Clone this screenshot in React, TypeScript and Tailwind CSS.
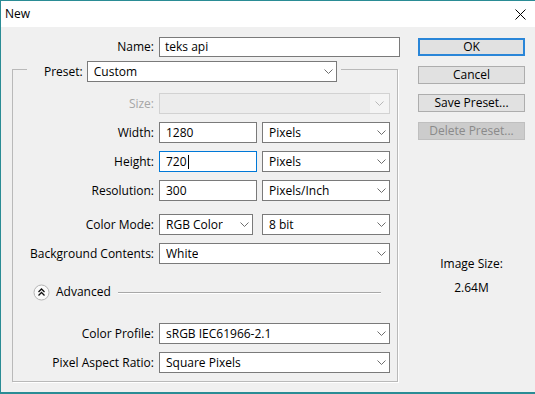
import React from "react";

const Chevron = ({ light = false }: { light?: boolean }) => (
  <svg width="9" height="5" viewBox="0 0 9 5" className="shrink-0">
    <path d="M0.5 0.5 L4.5 4.5 L8.5 0.5" fill="none" stroke={light ? "#b8b8b8" : "#6e6e6e"} strokeWidth="1" />
  </svg>
);

const Select = ({ value, w }: { value: string; w: string }) => (
  <div className={`${w} h-[21px] bg-white border border-[#7a7a7a] flex items-center justify-between pl-[6px] pr-[3px] shrink-0`}>
    <span className="truncate">{value}</span>
    <Chevron />
  </div>
);

const Label = ({ children, dim = false, outer = false }: { children: React.ReactNode; dim?: boolean; outer?: boolean }) => (
  <div className={`${outer ? "w-[147px]" : "w-[146px]"} text-right pr-[5px] shrink-0 ${dim ? "text-[#a6a6a6]" : "text-black"}`}>{children}</div>
);

const Btn = ({ children, primary = false, disabled = false }: { children: React.ReactNode; primary?: boolean; disabled?: boolean }) => (
  <div
    className={`h-[18px] w-[107px] flex items-center justify-center ${
      primary
        ? "border-2 border-[#2a86d8] bg-[#e1e1e1] text-black"
        : disabled
        ? "border border-[#bfbfbf] bg-[#cccccc] text-[#8a8a8a]"
        : "border border-[#adadad] bg-[#e1e1e1] text-black"
    }`}
  >
    {children}
  </div>
);

export default function App() {
  return (
    <div
      className="w-[535px] h-[394px] bg-[#f0f0f0] border-t border-l border-b-2 border-[#2a8c95] flex flex-col text-[12px] leading-[16px] text-black overflow-hidden"
      style={{ fontFamily: '"Open Sans", "Noto Sans", sans-serif' }}
    >
      {/* Title bar */}
      <div className="h-[26px] bg-white flex items-center justify-between shrink-0">
        <span className="pl-[4px] text-[12px]">New</span>
        <svg width="11" height="11" viewBox="0 0 11 11" className="mr-[9px]">
          <path d="M0.5 0.5 L10.5 10.5 M10.5 0.5 L0.5 10.5" stroke="#000" strokeWidth="1" />
        </svg>
      </div>

      {/* Body */}
      <div className="flex pt-[10px] pl-[11px]">
        {/* Left column */}
        <div className="w-[386px] flex flex-col">
          <div className="flex items-center">
            <Label outer>Name:</Label>
            <div className="w-[241px] h-[20px] bg-white border border-[#7a7a7a] flex items-center pl-[5px] shrink-0">teks api</div>
          </div>

          <fieldset className="border border-[#b9b9b9] mt-0 pb-[8px] shadow-[1px_1px_0_#ffffff]">
            <legend className="ml-[14px] pt-[4px] pl-[17px] pr-[4px]">
              <div className="flex items-center gap-[4px]">
                <span>Preset:</span>
                <Select value="Custom" w="w-[250px]" />
              </div>
            </legend>

            <div className="flex flex-col">
              {/* Size */}
              <div className="flex items-center mt-[11px]">
                <Label dim>Size:</Label>
                <div className="w-[231px] h-[21px] bg-[#ececec] border border-[#d2d2d2] flex items-center justify-end">
                  <div className="w-[19px] h-full bg-[#f4f4f4] flex items-center justify-center">
                    <Chevron light />
                  </div>
                </div>
              </div>

              {/* Width */}
              <div className="flex items-center mt-[8px]">
                <Label>Width:</Label>
                <div className="w-[98px] h-[21px] bg-white border border-[#7a7a7a] flex items-center pl-[6px]">1280</div>
                <div className="ml-[5px]">
                  <Select value="Pixels" w="w-[128px]" />
                </div>
              </div>

              {/* Height */}
              <div className="flex items-center mt-[8px]">
                <Label>Height:</Label>
                <div className="w-[98px] h-[21px] bg-white border border-[#0078d7] flex items-center pl-[6px]">
                  720<span className="inline-block w-[1px] h-[14px] bg-black ml-[1px]" />
                </div>
                <div className="ml-[5px]">
                  <Select value="Pixels" w="w-[128px]" />
                </div>
              </div>

              {/* Resolution */}
              <div className="flex items-center mt-[8px]">
                <Label>Resolution:</Label>
                <div className="w-[98px] h-[21px] bg-white border border-[#7a7a7a] flex items-center pl-[6px]">300</div>
                <div className="ml-[5px]">
                  <Select value="Pixels/Inch" w="w-[128px]" />
                </div>
              </div>

              {/* Color Mode */}
              <div className="flex items-center mt-[13px]">
                <Label>Color Mode:</Label>
                <Select value="RGB Color" w="w-[94px]" />
                <div className="ml-[9px]">
                  <Select value="8 bit" w="w-[128px]" />
                </div>
              </div>

              {/* Background */}
              <div className="flex items-center mt-[8px]">
                <Label>Background Contents:</Label>
                <Select value="White" w="w-[231px]" />
              </div>

              {/* Advanced */}
              <div className="flex items-center mt-[20px] pl-[20px] pr-[16px] h-[16px]">
                <svg width="17" height="17" viewBox="0 0 17 17" className="shrink-0">
                  <circle cx="8.5" cy="8.5" r="7.5" fill="#fafafa" stroke="#b4b4b4" />
                  <path d="M5.5 8 L8.5 5 L11.5 8 M5.5 11.5 L8.5 8.5 L11.5 11.5" fill="none" stroke="#111" strokeWidth="1.3" />
                </svg>
                <span className="ml-[6px]">Advanced</span>
                <div className="ml-[7px] flex-1 h-[1px] bg-[#a8a8a8] shadow-[0_1px_0_#ffffff]" />
              </div>

              {/* Color Profile */}
              <div className="flex items-center mt-[23px]">
                <Label>Color Profile:</Label>
                <Select value="sRGB IEC61966-2.1" w="w-[231px]" />
              </div>

              {/* Pixel Aspect Ratio */}
              <div className="flex items-center mt-[8px]">
                <Label>Pixel Aspect Ratio:</Label>
                <Select value="Square Pixels" w="w-[231px]" />
              </div>
            </div>
          </fieldset>
        </div>

        {/* Right column */}
        <div className="ml-[20px] w-[107px] flex flex-col pt-[1px]">
          <Btn primary>OK</Btn>
          <div className="mt-[10px]"><Btn>Cancel</Btn></div>
          <div className="mt-[10px]"><Btn>Save Preset...</Btn></div>
          <div className="mt-[10px]"><Btn disabled>Delete Preset...</Btn></div>
          <div className="mt-[116px] text-center">Image Size:</div>
          <div className="mt-[8px] text-center">2.64M</div>
        </div>
      </div>
    </div>
  );
}
